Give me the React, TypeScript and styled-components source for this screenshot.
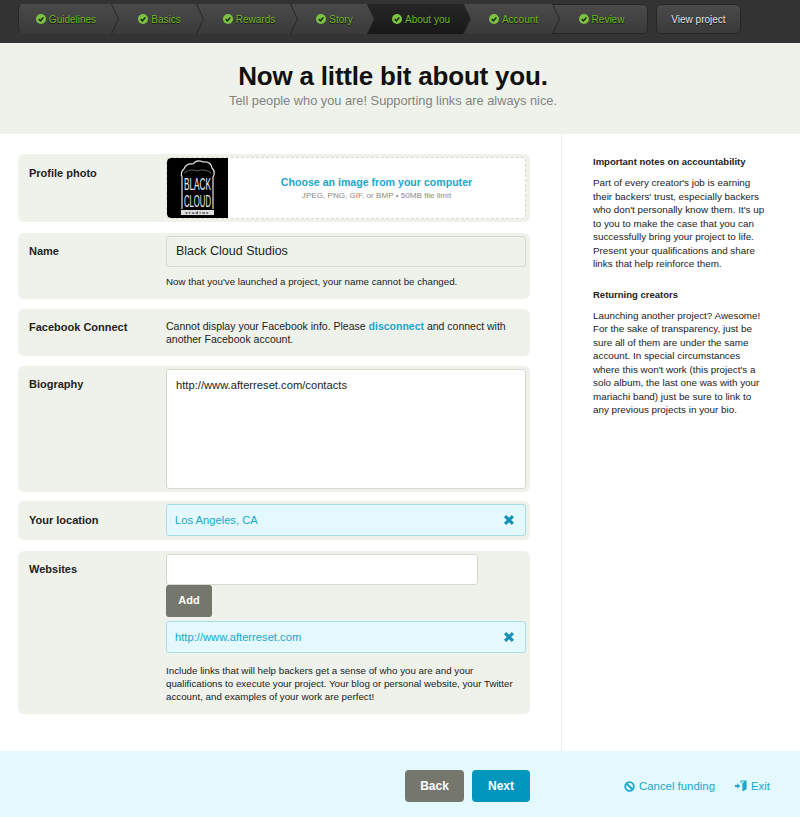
import React from 'react'
import styled, { createGlobalStyle } from 'styled-components'

const GlobalStyle = createGlobalStyle`
  html, body {
    margin: 0;
    padding: 0;
    background: #fff;
    font-family: "Liberation Sans", Arial, sans-serif;
    color: #222;
  }
  * {
    box-sizing: border-box;
  }
`

const TopBar = styled.div`
  display: flex;
  gap: 8px;
  height: 43px;
  padding: 4px 0 0 18px;
  background: #333;
`

const Steps = styled.div`
  display: flex;
  height: 30px;
  width: 630px;
  border-radius: 5px;
  border: 1px solid #262626;
  background: linear-gradient(#4a4a4a, #3a3a3a);
`

const Step = styled.div<{ $width: number; $order: number; $active?: boolean; $first?: boolean; $last?: boolean }>`
  position: relative;
  z-index: ${({ $order }) => 10 - $order};
  display: flex;
  align-items: center;
  justify-content: center;
  gap: 3px;
  flex: 0 0 ${({ $width }) => $width}px;
  margin-top: -1px;
  height: 30px;
  padding-right: ${({ $first }) => ($first ? '6px' : '4px')};
  font-size: 10px;
  color: #6cb81c;
  text-shadow: 0 1px 1px #111;

  &::before,
  &::after {
    content: '';
    position: absolute;
    z-index: -1;
    left: ${({ $first }) => ($first ? '8px' : '-8px')};
    right: 0;
    height: 15px;
    border-right: ${({ $last }) => ($last ? 'none' : '1px solid #262626')};
  }
  &::before {
    top: 0;
    transform-origin: bottom right;
    transform: skewX(25deg);
    background: ${({ $active, $last }) =>
      $active ? 'linear-gradient(#262626, #1f1f1f)' : $last ? 'transparent' : 'linear-gradient(#4a4a4a, #424242)'};
  }
  &::after {
    bottom: 0;
    transform-origin: top right;
    transform: skewX(-25deg);
    background: ${({ $active, $last }) =>
      $active ? 'linear-gradient(#1f1f1f, #181818)' : $last ? 'transparent' : 'linear-gradient(#424242, #3a3a3a)'};
  }
`

const ViewProject = styled.div`
  display: flex;
  align-items: center;
  justify-content: center;
  width: 85px;
  height: 30px;
  border-radius: 5px;
  border: 1px solid #262626;
  background: linear-gradient(#4a4a4a, #3a3a3a);
  font-size: 10px;
  color: #e6e6e6;
  text-shadow: 0 1px 1px #111;
`

const Header = styled.div`
  height: 91px;
  padding: 18px 14px 0 0;
  background: #eff2eb;
  text-align: center;
`

const Title = styled.h1`
  margin: 0;
  font-size: 26px;
  letter-spacing: -0.2px;
  line-height: 30px;
  font-weight: bold;
  color: #111;
`

const Subtitle = styled.p`
  margin: 0;
  font-size: 12.8px;
  line-height: 20px;
  color: #828282;
`

const Body = styled.div`
  display: flex;
  height: 617px;
`

const FormColumn = styled.div`
  display: flex;
  flex-direction: column;
  width: 562px;
  padding: 20px 31px 0 18px;
  border-right: 1px dotted #dcdcdc;
`

const Row = styled.div<{ $height: number; $gap?: number }>`
  display: flex;
  height: ${({ $height }) => $height}px;
  margin-bottom: ${({ $gap }) => $gap ?? 10}px;
  padding: 3px 4px 0 11px;
  background: #eff2eb;
  border-radius: 6px;
`

const Label = styled.div<{ $top?: number }>`
  flex: 0 0 137px;
  padding-top: ${({ $top }) => $top ?? 8}px;
  font-size: 11px;
  line-height: 14px;
  font-weight: bold;
  color: #222;
`

const Field = styled.div`
  flex: 1;
  min-width: 0;
`

const Upload = styled.div`
  display: flex;
  height: 62px;
  background: #fff;
  border: 1px dashed #d5d8ce;
  border-radius: 5px;
  overflow: hidden;
`

const Logo = styled.svg`
  flex: 0 0 61px;
  display: block;
  height: 60px;
  background: #000;
  border-radius: 4px 0 0 4px;
`

const UploadText = styled.div`
  flex: 1;
  padding-top: 17px;
  text-align: center;
`

const UploadLink = styled.div`
  font-size: 10.6px;
  line-height: 14px;
  font-weight: bold;
  color: #1ba6cc;
`

const UploadHint = styled.div`
  font-size: 8.1px;
  line-height: 13px;
  color: #8a8a8a;
`

const ReadOnly = styled.div`
  height: 31px;
  padding: 0 9px;
  font-size: 12.5px;
  line-height: 29px;
  color: #222;
  background: #eff2eb;
  border: 1px solid #d6d9cf;
  border-radius: 3px;
`

const Note = styled.p<{ $top: number }>`
  margin: ${({ $top }) => $top}px 0 0;
  font-size: 9.75px;
  line-height: 13px;
  color: #222;
`

const PlainText = styled.p`
  margin: 8px 0 0 0;
  font-size: 10.5px;
  line-height: 13px;
  color: #222;
`

const Strong = styled.span`
  font-weight: bold;
  color: #1ba6cc;
`

const Bio = styled.div`
  height: 120px;
  padding: 8px 9px;
  font-size: 11.2px;
  line-height: 14px;
  color: #222;
  background: #fff;
  border: 1px solid #d6d9cf;
  border-radius: 3px;
`

const Tag = styled.div`
  display: flex;
  align-items: center;
  justify-content: space-between;
  height: 32px;
  padding: 0 11px 0 8px;
  font-size: 11.2px;
  color: #1ba6cc;
  background: #e3f9fd;
  border: 1px solid #a9dfe9;
  border-radius: 3px;
`

const TagClose = styled.svg`
  width: 10px;
  height: 10px;
  fill: #1690b5;
`

const UrlInput = styled.div`
  width: 312px;
  height: 31px;
  background: #fff;
  border: 1px solid #d6d9cf;
  border-radius: 3px;
`

const AddButton = styled.div`
  width: 46px;
  height: 32px;
  margin: 0 0 4px;
  font-size: 11px;
  line-height: 30px;
  font-weight: bold;
  text-align: center;
  color: #fff;
  background: #75776c;
  border-radius: 3px;
`

const Sidebar = styled.div`
  flex: 1;
  padding: 21px 33px 0 31px;
  font-size: 9.85px;
  line-height: 13.5px;
  color: #222;
`

const SideTitle = styled.h3`
  margin: 0 0 8px;
  font-size: 9.5px;
  line-height: 13px;
  font-weight: bold;
`

const SideText = styled.p`
  margin: 0 0 17px;
`

const Footer = styled.div`
  display: flex;
  align-items: flex-start;
  height: 66px;
  padding: 19px 30px 0 405px;
  background: #e3f9fd;
`

const FootButton = styled.div<{ $primary?: boolean }>`
  width: ${({ $primary }) => ($primary ? 58 : 59)}px;
  height: 32px;
  margin-right: 8px;
  font-size: 12px;
  line-height: 32px;
  font-weight: bold;
  text-align: center;
  color: #fff;
  background: ${({ $primary }) => ($primary ? '#0096bd' : '#75776c')};
  border-radius: 4px;
`

const FootLinks = styled.div`
  display: flex;
  gap: 20px;
  margin-left: auto;
  padding-top: 9px;
`

const FootLink = styled.div`
  display: flex;
  align-items: center;
  gap: 4px;
  font-size: 11.4px;
  line-height: 14px;
  color: #1ba6cc;
`

const CheckCircle = () => (
  <svg width="10" height="10" viewBox="0 0 10 10">
    <circle cx="5" cy="5" r="5" fill="#7cc242" />
    <path d="M2.7 5.1 4.4 6.8 7.4 3.6" fill="none" stroke="#1d2a10" strokeWidth="1.5" />
  </svg>
)

const CloudLogo = () => (
  <Logo viewBox="0 0 61 60">
    <path
      d="M15 51V19Q13 14 17 11Q19 5 26 6Q30 1 36 4Q44 3 45 10Q49 14 46 19V51"
      fill="none"
      stroke="#e4e4e4"
      strokeWidth="1.2"
    />
    <path d="M17 15Q24 10 30 13Q38 10 44 15" fill="none" stroke="#777" strokeWidth="0.8" />
    <text transform="translate(17 32) scale(0.485 1)" fontFamily="Liberation Sans" fontSize="17" fill="#eee">
      BLACK
    </text>
    <text transform="translate(17 49) scale(0.454 1)" fontFamily="Liberation Sans" fontSize="17" fill="#eee">
      CLOUD
    </text>
    <rect x="14" y="52" width="33" height="5" fill="#ddd" />
    <text x="30.5" y="56.2" textAnchor="middle" fontFamily="Liberation Sans" fontSize="4.2" fontWeight="bold" fill="#111" letterSpacing="1.4">
      studios
    </text>
  </Logo>
)

const CloseIcon = () => (
  <TagClose viewBox="0 0 10 10">
    <path d="M2.2 0 5 2.8 7.8 0 10 2.2 7.2 5 10 7.8 7.8 10 5 7.2 2.2 10 0 7.8 2.8 5 0 2.2Z" />
  </TagClose>
)

const steps = [
  { label: 'Guidelines', width: 100 },
  { label: 'Basics', width: 85 },
  { label: 'Rewards', width: 94 },
  { label: 'Story', width: 77 },
  { label: 'About you', width: 96, active: true },
  { label: 'Account', width: 89 },
  { label: 'Review', width: 87 },
]

export default function App() {
  return (
    <>
      <GlobalStyle />
      <TopBar>
        <Steps>
          {steps.map((step, i) => (
            <Step
              key={step.label}
              $width={step.width}
              $order={i}
              $active={step.active}
              $first={i === 0}
              $last={i === steps.length - 1}
            >
              <CheckCircle />
              {step.label}
            </Step>
          ))}
        </Steps>
        <ViewProject>View project</ViewProject>
      </TopBar>
      <Header>
        <Title>Now a little bit about you.</Title>
        <Subtitle>Tell people who you are! Supporting links are always nice.</Subtitle>
      </Header>
      <Body>
        <FormColumn>
          <Row $height={68} $gap={11}>
            <Label $top={9}>Profile photo</Label>
            <Field>
              <Upload>
                <CloudLogo />
                <UploadText>
                  <UploadLink>Choose an image from your computer</UploadLink>
                  <UploadHint>JPEG, PNG, GIF, or BMP • 50MB file limit</UploadHint>
                </UploadText>
              </Upload>
            </Field>
          </Row>
          <Row $height={66}>
            <Label>Name</Label>
            <Field>
              <ReadOnly>Black Cloud Studios</ReadOnly>
              <Note $top={8}>Now that you've launched a project, your name cannot be changed.</Note>
            </Field>
          </Row>
          <Row $height={47}>
            <Label>Facebook Connect</Label>
            <Field>
              <PlainText>
                Cannot display your Facebook info. Please <Strong>disconnect</Strong> and connect with another Facebook
                account.
              </PlainText>
            </Field>
          </Row>
          <Row $height={126} $gap={9}>
            <Label>Biography</Label>
            <Field>
              <Bio>http://www.afterreset.com/contacts</Bio>
            </Field>
          </Row>
          <Row $height={39} $gap={11}>
            <Label $top={9}>Your location</Label>
            <Field>
              <Tag>
                Los Angeles, CA
                <CloseIcon />
              </Tag>
            </Field>
          </Row>
          <Row $height={163}>
            <Label>Websites</Label>
            <Field>
              <UrlInput />
              <AddButton>Add</AddButton>
              <Tag>
                http://www.afterreset.com
                <CloseIcon />
              </Tag>
              <Note $top={11}>
                Include links that will help backers get a sense of who you are and your qualifications to execute your
                project. Your blog or personal website, your Twitter account, and examples of your work are perfect!
              </Note>
            </Field>
          </Row>
        </FormColumn>
        <Sidebar>
          <SideTitle>Important notes on accountability</SideTitle>
          <SideText>
            Part of every creator's job is earning their backers' trust, especially backers who don't personally know
            them. It's up to you to make the case that you can successfully bring your project to life. Present your
            qualifications and share links that help reinforce them.
          </SideText>
          <SideTitle>Returning creators</SideTitle>
          <SideText>
            Launching another project? Awesome! For the sake of transparency, just be sure all of them are under the
            same account. In special circumstances where this won't work (this project's a solo album, the last one was
            with your mariachi band) just be sure to link to any previous projects in your bio.
          </SideText>
        </Sidebar>
      </Body>
      <Footer>
        <FootButton>Back</FootButton>
        <FootButton $primary>Next</FootButton>
        <FootLinks>
          <FootLink>
            <svg width="11" height="11" viewBox="0 0 11 11" fill="none" stroke="#1ba6cc" strokeWidth="1.8">
              <circle cx="5.5" cy="5.5" r="4.3" />
              <path d="M2.5 2.5 8.5 8.5" />
            </svg>
            Cancel funding
          </FootLink>
          <FootLink>
            <svg width="12" height="12" viewBox="0 0 13 12" fill="#1ba6cc">
              <path d="M6 0H12.5V9.5L8 12V3L10.5 1H7V3H6Z" />
              <path d="M0 5H2.5V3L5.5 6 2.5 9V7H0Z" />
            </svg>
            Exit
          </FootLink>
        </FootLinks>
      </Footer>
    </>
  )
}
